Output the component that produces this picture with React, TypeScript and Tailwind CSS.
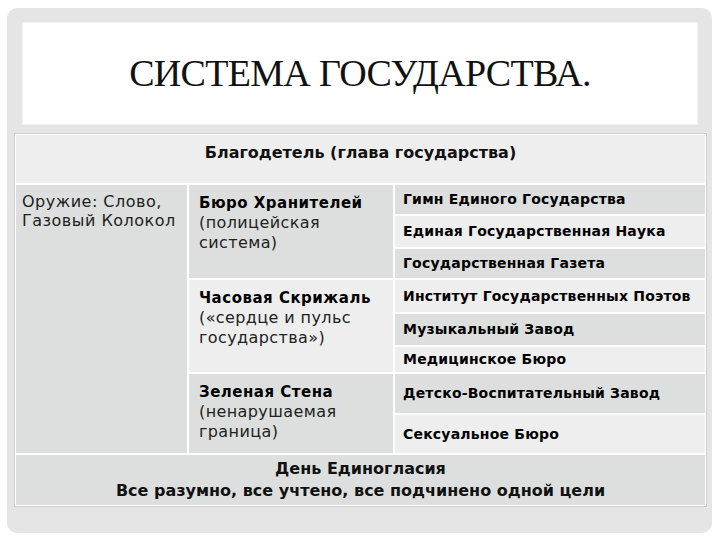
import React from "react";

const dark = "bg-[#dcdfdd]";
const light = "bg-[#eeeeee]";

function Sub({ text, h, tone }: { text: string; h: string; tone: string }) {
  return (
    <div className={`${h} ${tone} flex items-center pl-[8px] text-[14px] font-bold text-black tracking-[0.2px]`}>
      {text}
    </div>
  );
}

function Mid({ title, lines, tone }: { title: string; lines: string[]; tone: string }) {
  return (
    <div className={`${tone} pl-[10px] pt-[8px] text-[16px] leading-[20px] text-[#222] tracking-[0.4px]`}>
      <div className="font-bold text-black text-[15px] tracking-[0.5px]">{title}</div>
      {lines.map((l) => (
        <div key={l}>{l}</div>
      ))}
    </div>
  );
}

export default function App() {
  return (
    <div className="w-[720px] h-[540px] bg-white pt-[8px] pl-[7px]" style={{ fontFamily: '"DejaVu Sans", sans-serif' }}>
      <div className="w-[705px] h-[525px] rounded-[10px] bg-[#e5e5e5] flex flex-col">
        <div className="mt-[14px] ml-[15px] w-[676px] h-[103px] bg-white border border-[#f2f2f2] flex items-center justify-center">
          <div className="text-[38px] text-[#111] tracking-[-0.7px]" style={{ fontFamily: '"Liberation Serif", serif' }}>
            СИСТЕМА ГОСУДАРСТВА.
          </div>
        </div>
        <div className="mt-[8px] ml-[7px] w-[693px] border border-[#cfcfcf] bg-white p-px flex flex-col gap-[2px]">
          <div className={`h-[48px] ${light} flex items-start justify-center pt-[6px] text-[16px] font-bold text-[#111]`}>
            Благодетель (глава государства)
          </div>
          <div className="grid grid-cols-[171px_204px_1fr] gap-[2px]">
            <div className={`${dark} row-span-3 pl-[6px] pt-[7px] text-[16px] leading-[19px] text-[#222] tracking-[0.5px]`}>
              <div>Оружие: Слово,</div>
              <div>Газовый Колокол</div>
            </div>
            <Mid tone={`${dark} h-[93px]`} title="Бюро Хранителей" lines={["(полицейская", "система)"]} />
            <div className="flex flex-col gap-[2px]">
              <Sub text="Гимн Единого Государства" h="h-[29px]" tone={dark} />
              <Sub text="Единая Государственная Наука" h="h-[31px]" tone={light} />
              <Sub text="Государственная Газета" h="h-[29px]" tone={dark} />
            </div>
            <Mid tone={`${light} h-[92px]`} title="Часовая Скрижаль" lines={["(«сердце и пульс", "государства»)"]} />
            <div className="flex flex-col gap-[2px]">
              <Sub text="Институт Государственных Поэтов" h="h-[32px]" tone={light} />
              <Sub text="Музыкальный Завод" h="h-[31px]" tone={dark} />
              <Sub text="Медицинское Бюро" h="h-[25px]" tone={light} />
            </div>
            <Mid tone={`${dark} h-[79px]`} title="Зеленая Стена" lines={["(ненарушаемая", "граница)"]} />
            <div className="flex flex-col gap-[2px]">
              <Sub text="Детско-Воспитательный Завод" h="h-[39px]" tone={dark} />
              <Sub text="Сексуальное Бюро" h="h-[38px]" tone={light} />
            </div>
          </div>
          <div className={`h-[50px] ${dark} flex flex-col items-center justify-center text-[16px] leading-[22px] font-bold text-[#111]`}>
            <div>День Единогласия</div>
            <div>Все разумно, все учтено, все подчинено одной цели</div>
          </div>
        </div>
      </div>
    </div>
  );
}
